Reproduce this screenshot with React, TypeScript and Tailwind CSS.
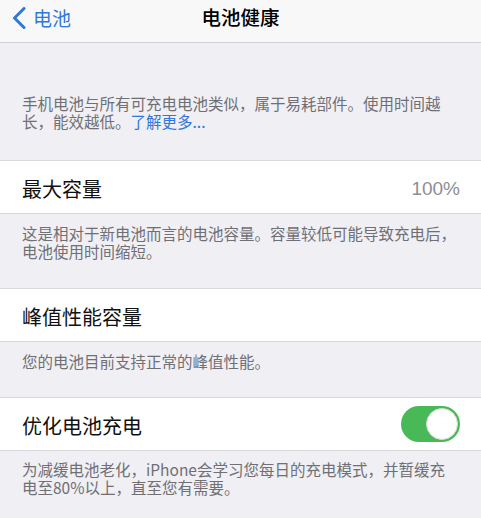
import React from "react";

const Row = ({ label, children }: { label: string; children?: React.ReactNode }) => (
  <div className="flex h-[54px] items-center justify-between border-y border-[#d9d9dd] bg-white pl-[22px] pr-[21px] pt-[3px]">
    <span className="text-[20px] leading-none text-[#111]">{label}</span>
    {children}
  </div>
);

const Desc = ({ children, className = "" }: { children: React.ReactNode; className?: string }) => (
  <div className={`px-[22px] text-[15.5px] leading-[18px] text-[#6f6f74] ${className}`}>{children}</div>
);

export default function App() {
  return (
    <div
      className="flex h-[518px] w-[481px] flex-col overflow-hidden bg-[#efeff4]"
      style={{ fontFamily: '"Noto Sans CJK SC", "Noto Sans", sans-serif' }}
    >
      <header className="relative flex h-[43px] items-start justify-center border-b border-[#cfcfd3] bg-[#f8f8f8]">
        <div className="absolute left-[12px] top-0 flex h-[35px] items-center gap-[7px] text-[#2f77d8]">
          <svg width="14" height="22" viewBox="0 0 14 22" fill="none">
            <path d="M12 1.5 L2.5 11 L12 20.5" stroke="#2f77d8" strokeWidth="3" strokeLinecap="round" strokeLinejoin="round" />
          </svg>
          <span className="text-[19px] leading-none">电池</span>
        </div>
        <div className="flex h-[34px] items-center">
          <span className="text-[19.5px] font-medium leading-none text-black">电池健康</span>
        </div>
      </header>

      <Desc className="pt-[51px] pb-[30px]">
        手机电池与所有可充电电池类似，属于易耗部件。使用时间越
        <br />
        长，能效越低。<span className="text-[#2f77d8]">了解更多...</span>
      </Desc>

      <Row label="最大容量">
        <span className="text-[19px] leading-none text-[#8e8e93]" style={{ fontFamily: '"Liberation Sans", sans-serif' }}>
          100%
        </span>
      </Row>
      <Desc className="pt-[10px] pb-[28px]">
        这是相对于新电池而言的电池容量。容量较低可能导致充电后，
        <br />
        电池使用时间缩短。
      </Desc>

      <Row label="峰值性能容量" />
      <Desc className="pt-[10px] pb-[27px]">您的电池目前支持正常的峰值性能。</Desc>

      <Row label="优化电池充电">
        <div className="-mt-[3px] flex h-[36px] w-[59px] items-center justify-end rounded-full bg-[#48b957] p-[2px]">
          <div className="h-[32px] w-[32px] rounded-full border border-[#d7d7d7] bg-white" />
        </div>
      </Row>
      <Desc className="pt-[9px]">
        为减缓电池老化，iPhone会学习您每日的充电模式，并暂缓充
        <br />
        电至80%以上，直至您有需要。
      </Desc>
    </div>
  );
}
